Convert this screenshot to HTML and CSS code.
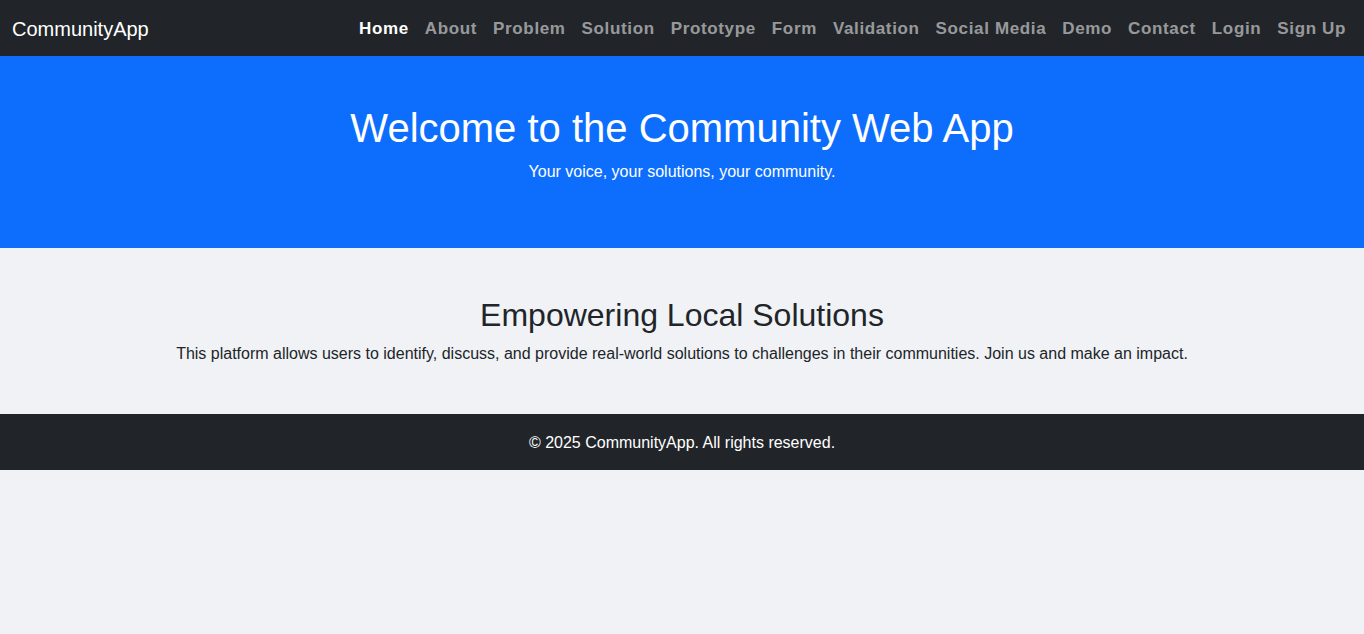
FILE: index.html
```html
<!DOCTYPE html>
<html lang="en">
<head>
<meta charset="utf-8">
<title>CommunityApp</title>
<link rel="stylesheet" href="styles.css">
</head>
<body>
<nav class="navbar">
  <a class="brand" href="#">CommunityApp</a>
  <ul class="nav">
    <li><a class="nav-link active" href="#">Home</a></li>
    <li><a class="nav-link" href="#">About</a></li>
    <li><a class="nav-link" href="#">Problem</a></li>
    <li><a class="nav-link" href="#">Solution</a></li>
    <li><a class="nav-link" href="#">Prototype</a></li>
    <li><a class="nav-link" href="#">Form</a></li>
    <li><a class="nav-link" href="#">Validation</a></li>
    <li><a class="nav-link" href="#">Social Media</a></li>
    <li><a class="nav-link" href="#">Demo</a></li>
    <li><a class="nav-link" href="#">Contact</a></li>
    <li><a class="nav-link" href="#">Login</a></li>
    <li><a class="nav-link" href="#">Sign Up</a></li>
  </ul>
</nav>
<header class="hero">
  <h1>Welcome to the Community Web App</h1>
  <p>Your voice, your solutions, your community.</p>
</header>
<section class="intro">
  <h2>Empowering Local Solutions</h2>
  <p>This platform allows users to identify, discuss, and provide real-world solutions to challenges in their communities. Join us and make an impact.</p>
</section>
<footer class="footer">
  <p>&copy; 2025 CommunityApp. All rights reserved.</p>
</footer>
</body>
</html>
```
FILE: styles.css
```css
* { box-sizing: border-box; }
html, body { margin: 0; padding: 0; }
body {
  font-family: "Liberation Sans", Arial, sans-serif;
  font-size: 16px;
  line-height: 1.5;
  color: #212529;
  background: #f0f2f5;
}
.navbar {
  height: 56px;
  background: #212529;
  display: flex;
  align-items: center;
  justify-content: space-between;
  padding: 0 10px 0 12px;
}
.brand {
  color: #fff;
  font-size: 20px;
  text-decoration: none;
  line-height: 30px;
  margin-top: 1px;
}
.nav {
  list-style: none;
  margin: 0;
  padding: 0;
  display: flex;
}
.nav-link {
  display: block;
  padding: 9px 8px 7px;
  color: rgba(255, 255, 255, 0.55);
  text-decoration: none;
  font-weight: 700;
  font-size: 17px;
  letter-spacing: 0.64px;
}
.nav-link.active { color: #fff; }
.hero {
  background: #0d6efd;
  color: #fff;
  text-align: center;
  padding: 48px 16px;
}
.hero h1 {
  margin: 0 0 8px;
  font-size: 40px;
  font-weight: 400;
  line-height: 1.2;
}
.hero p { margin: 0 0 16px; }
.intro {
  text-align: center;
  padding: 48px 16px;
}
.intro h2 {
  margin: 0 0 8px;
  font-size: 32px;
  font-weight: 400;
  line-height: 1.2;
}
.intro p { margin: 0; }
.footer {
  background: #212529;
  color: #fff;
  text-align: center;
  padding: 17px 16px 15px;
}
.footer p { margin: 0; }
```
